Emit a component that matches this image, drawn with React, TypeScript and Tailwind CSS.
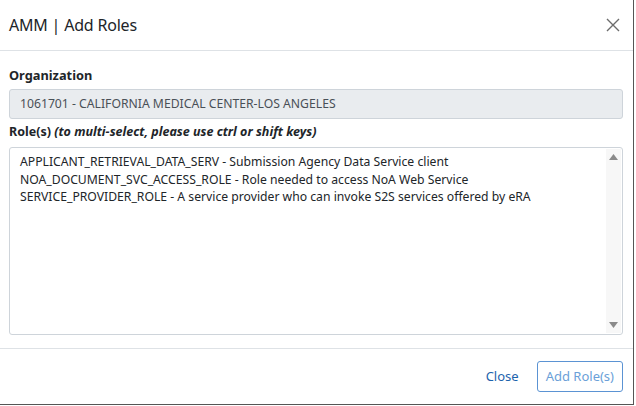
import React from "react";

const roles = [
  "APPLICANT_RETRIEVAL_DATA_SERV - Submission Agency Data Service client",
  "NOA_DOCUMENT_SVC_ACCESS_ROLE - Role needed to access NoA Web Service",
  "SERVICE_PROVIDER_ROLE - A service provider who can invoke S2S services offered by eRA",
];

const App: React.FC = () => {
  return (
    <div
      className="w-[636px] h-[406px] bg-white overflow-hidden"
      style={{ fontFamily: '"Noto Sans", "Open Sans", sans-serif' }}
    >
      <div className="w-[634px] h-[405px] bg-white border-r border-b border-[#555] flex flex-col">
        {/* header */}
        <div className="h-[51px] flex items-center justify-between pl-[9px] pr-[12px] border-b border-[#dee2e6]">
          <h2 className="text-[16px] text-[#212529] tracking-[-0.2px]">AMM | Add Roles</h2>
          <svg width="16" height="16" viewBox="0 0 16 16" className="text-[#6c6c6c]">
            <path d="M2 2 L14 14 M14 2 L2 14" stroke="currentColor" strokeWidth="1.4" />
          </svg>
        </div>

        {/* body */}
        <div className="flex-1 px-[9px] pt-[14px]">
          <div className="text-[12.8px] font-bold text-[#212529] leading-[20px]">Organization</div>
          <div className="mt-[4px] h-[30px] bg-[#e9ecef] border border-[#ced4da] rounded-[3px] flex items-center pl-[10px] text-[12.2px] text-[#495057] w-[614px]">
            1061701 - CALIFORNIA MEDICAL CENTER-LOS ANGELES
          </div>
          <div className="mt-[2px] text-[12.5px] font-bold text-[#212529] leading-[22px]">
            Role(s) <i>(to multi-select, please use ctrl or shift keys)</i>
          </div>
          <div className="mt-[4px] h-[188px] w-[614px] border border-[#ced4da] rounded-[3px] flex">
            <div className="flex-1 pl-[10px] pt-[5px] text-[12.2px] text-[#212529] leading-[17.5px]">
              {roles.map((r) => (
                <div key={r} className="whitespace-nowrap">{r}</div>
              ))}
            </div>
            <div className="w-[15px] mr-[1px] my-[1px] bg-[#f7f7f7] flex flex-col justify-between items-center py-[5px]">
              <svg width="9" height="6" viewBox="0 0 9 6">
                <path d="M0 6 L4.5 0 L9 6 Z" fill="#8a8a8a" />
              </svg>
              <svg width="9" height="6" viewBox="0 0 9 6">
                <path d="M0 0 L4.5 6 L9 0 Z" fill="#8a8a8a" />
              </svg>
            </div>
          </div>
        </div>

        {/* footer */}
        <div className="h-[56px] border-t border-[#dee2e6] flex items-center justify-end pr-[10px] gap-[18px]">
          <button className="text-[13px] text-[#1d64ad]">Close</button>
          <button className="h-[31px] px-[8px] border border-[#5b93d3] rounded-[3px] text-[13px] text-[#6b9fd8]">
            Add Role(s)
          </button>
        </div>
      </div>
    </div>
  );
};

export default App;
